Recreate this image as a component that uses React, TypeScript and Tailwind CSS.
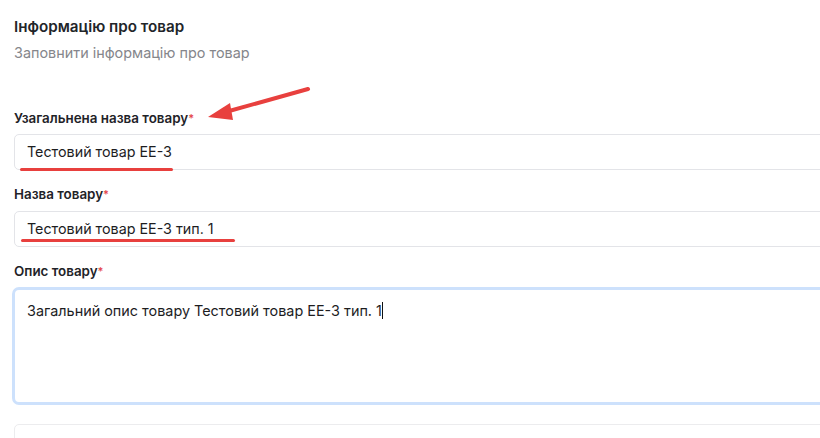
import React from 'react';

// Single form section: product info with annotation marks
const fontStack = '"Inter", "Noto Sans", sans-serif';

function Label({ text }: { text: string }) {
  return (
    <div className="h-[18px] text-[13.4px] leading-[18px] font-semibold text-[#1f2328]">
      {text}
      <span className="text-[#e5484d] text-[11px] align-top">*</span>
    </div>
  );
}

function Field({ value }: { value: string }) {
  return (
    <div className="h-[36px] w-[840px] rounded-[5px] border border-[#e3e4e8] bg-white pl-[12px] flex items-center text-[14.3px] text-[#1d1d1f]">
      {value}
    </div>
  );
}

export default function App() {
  return (
    <div
      className="relative w-[820px] h-[438px] overflow-hidden bg-white"
      style={{ fontFamily: fontStack }}
    >
      <div className="pl-[14px] pt-[17px] flex flex-col">
        <h2 className="text-[15.2px] leading-[20px] font-semibold text-[#222529]">
          Інформацію про товар
        </h2>
        <p className="mt-[6px] text-[14.4px] leading-[20px] text-[#85868b]">
          Заповнити інформацію про товар
        </p>

        <div className="mt-[46px]">
          <Label text="Узагальнена назва товару" />
        </div>
        <div className="mt-[7px]">
          <Field value="Тестовий товар ЕЕ-3" />
        </div>

        <div className="mt-[15px]">
          <Label text="Назва товару" />
        </div>
        <div className="mt-[8px]">
          <Field value="Тестовий товар ЕЕ-3 тип. 1" />
        </div>

        <div className="mt-[15px]">
          <Label text="Опис товару" />
        </div>
        <div className="mt-[7px] -ml-[2px] h-[118px] w-[842px] rounded-[7px] border-[3px] border-[#cde1fc] bg-white pl-[12px] pt-[11px] text-[14.4px] leading-[20px] text-[#1d1d1f]">
          Загальний опис товару Тестовий товар ЕЕ-3 тип. 1
          <span className="inline-block w-px h-[17px] bg-[#111] align-[-3px]" />
        </div>

        <div className="mt-[19px] h-[40px] w-[840px] rounded-[5px] border border-[#ececee]" />
      </div>

      {/* red annotation marks */}
      <div className="absolute left-[20px] top-[168px] h-[3px] w-[153px] rounded-full bg-[#e8403e]" />
      <div className="absolute left-[21px] top-[239px] h-[3px] w-[214px] rounded-full bg-[#e8403e]" />
      <svg
        className="absolute left-[200px] top-[80px]"
        width="120"
        height="45"
        viewBox="0 0 120 45"
      >
        <line x1="108" y1="9" x2="22" y2="33" stroke="#e8403e" strokeWidth="4" strokeLinecap="round" />
        <polygon points="8,37 30,23 33,40" fill="#e8403e" />
      </svg>
    </div>
  );
}
